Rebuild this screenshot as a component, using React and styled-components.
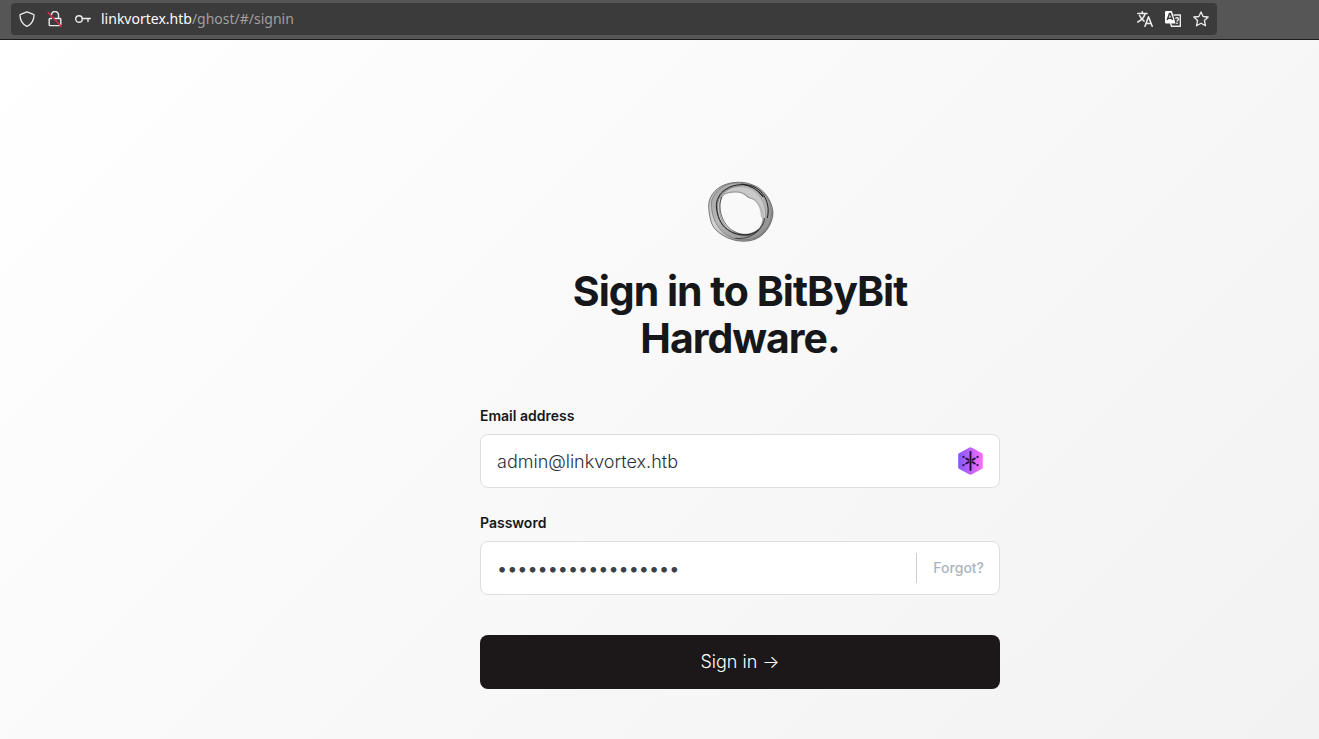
import React from 'react';
import styled, { createGlobalStyle } from 'styled-components';

const GlobalStyle = createGlobalStyle`
  *, *::before, *::after { box-sizing: border-box; }
  body {
    margin: 0;
    font-family: Inter, "Liberation Sans", sans-serif;
    color: #15171a;
  }
`;

const Page = styled.div`
  min-height: 100vh;
  display: flex;
  flex-direction: column;
`;

const Toolbar = styled.header`
  display: flex;
  height: 40px;
  padding: 3px 102px 4px 11px;
  background: #565656;
  border-bottom: 1px solid #1c1b1f;
`;

const AddressBar = styled.div`
  flex: 1;
  display: flex;
  align-items: center;
  justify-content: space-between;
  padding: 0 8px;
  border-radius: 4px;
  background: #3b3b3b;
`;

const IconGroup = styled.div`
  display: flex;
  align-items: center;
  gap: 12px;
`;

const ToolButton = styled.button`
  display: flex;
  padding: 0;
  border: 0;
  background: none;
  color: #ececec;
`;

const Url = styled.a`
  margin-left: -2px;
  font: 14px/20px "Noto Sans", sans-serif;
  color: #a0a0a0;
  text-decoration: none;
`;

const Host = styled.span`
  color: #fbfbfb;
`;

const Main = styled.main`
  flex: 1;
  display: flex;
  flex-direction: column;
  align-items: center;
  padding: 140px 0 48px 161px;
  background: linear-gradient(135deg, #ffffff 0%, #f2f2f2 100%);
`;

const Form = styled.form`
  display: flex;
  flex-direction: column;
  width: 100%;
  max-width: 520px;
`;

const Logo = styled.svg`
  align-self: center;
  display: block;
`;

const Title = styled.h1`
  margin: 24px 0 44px;
  padding: 0 64px;
  font-size: 41px;
  line-height: 47px;
  font-weight: 700;
  letter-spacing: -1px;
  text-align: center;
`;

const Field = styled.div`
  display: flex;
  flex-direction: column;
  gap: 8px;
  margin-bottom: 25px;
`;

const Label = styled.label`
  font-size: 14px;
  line-height: 20px;
  font-weight: 600;
`;

const InputBox = styled.div`
  display: flex;
  align-items: center;
  height: 54px;
  padding: 0 15px 0 16px;
  border: 1px solid #dddedf;
  border-radius: 8px;
  background: #ffffff;
`;

const Input = styled.input`
  flex: 1;
  min-width: 0;
  height: 100%;
  padding: 0;
  border: 0;
  outline: 0;
  background: none;
  font: 300 18px/24px Inter, sans-serif;
  font-weight: ${({ type }) => (type === 'password' ? 400 : 300)};
  color: ${({ type }) => (type === 'password' ? '#394047' : '#2b3138')};
`;

const ForgotButton = styled.button`
  height: 30px;
  padding: 0 0 0 16px;
  border: 0;
  border-left: 1px solid #c8ced3;
  background: none;
  font: 500 14px/20px Inter, sans-serif;
  color: #abb4be;
`;

const SubmitButton = styled.button`
  height: 54px;
  margin-top: 15px;
  border: 0;
  border-radius: 8px;
  background: #1c1719;
  font: 300 18px/24px Inter, sans-serif;
  color: #ffffff;
`;

const stroke = { fill: 'none', stroke: 'currentColor', strokeWidth: 1.3, strokeLinecap: 'round', strokeLinejoin: 'round' };

function ShieldIcon() {
  return (
    <svg width="16" height="16" viewBox="0 0 16 16" {...stroke}>
      <path d="M8 .8 14.500 3.300c.4.1.5.4.5.8 0 5-2 8.800-6.500 11.100a1.200 1.200 0 0 1-1 0C3 12.900 1 9.100 1 4.100c0-.4.1-.7.5-.8Z" />
    </svg>
  );
}

function InsecureLockIcon() {
  return (
    <svg width="16" height="16" viewBox="0 0 16 16" {...stroke} strokeWidth="1.400">
      <path d="M4.500 3.800a3.500 3.500 0 0 1 7 .4V7M7 7.500h6a.8.8 0 0 1 .8.8v5.200M4.500 7.500H3a.8.8 0 0 0-.8.8v5.500a.8.8 0 0 0 .8.8h9.500" />
      <path d="M1.200 1.700 14.200 15.200" stroke="#e22850" />
    </svg>
  );
}

function KeyIcon() {
  return (
    <svg width="16" height="16" viewBox="0 0 16 16" {...stroke} strokeWidth="1.400">
      <circle cx="4" cy="8" r="3.300" />
      <path d="M7.300 7.500h8M13 8v2.500" />
    </svg>
  );
}

function TranslateIcon() {
  return (
    <svg width="16" height="16" viewBox="0 0 16 16" {...stroke} strokeWidth="1.600">
      <path d="M.8 2.500h9.200M5.300.8v1.500M8 3C7 6.500 4.500 9 .8 11M2.600 4.500C3.700 7 5 8.800 7 10M8 15.200l3.500-9.400 3.700 9.400M9.300 12.500h4.600" />
    </svg>
  );
}

function TranslatePageIcon() {
  return (
    <svg width="16" height="16" viewBox="0 0 16 16" fill="none">
      <path d="M8.500 4h6.800v11.300H6.500l-1-3" stroke="currentColor" strokeWidth="1.400" />
      <path d="M0 1a1 1 0 0 1 1-1h6l3.500 12.500H1a1 1 0 0 1-1-1Z" fill="#ffffff" />
      <path d="m2.200 9 2.300-6.500h.8l2.300 6.500M3 7.200h4" stroke="#3b3b3b" strokeWidth="1.500" />
      <path d="M10.500 7.500c.6-1.200 3-1 3 .5 0 1.200-1.500 1.300-1.500 2.500M12 11.500v1.500" stroke="currentColor" strokeWidth="1.500" />
    </svg>
  );
}

function StarIcon() {
  return (
    <svg width="16" height="16" viewBox="0 0 16 16" {...stroke}>
      <path d="m8 .9 2.100 4.600 5.100.5-3.800 3.500 1.100 5.300L8 12.200l-4.500 2.600 1.100-5.300L.8 6l5.100-.5Z" />
    </svg>
  );
}

function RingLogo() {
  return (
    <Logo width="68" height="64" viewBox="32 30 204 192" role="img" aria-label="BitByBit Hardware">
      <defs>
        <linearGradient id="ring" x1="0" y1="0" x2="1" y2="1">
          <stop offset="0" stopColor="#8f8f8f" />
          <stop offset=".4" stopColor="#c0c0c0" />
          <stop offset="1" stopColor="#4d4d4d" />
        </linearGradient>
      </defs>
      <g fillRule="evenodd" stroke="#333333" strokeWidth="1.800" strokeLinejoin="round">
        <path fill="url(#ring)" fillOpacity=".65" d="M40 112C38 83 58 57 84 46C108 35 145 33 170 44C204 55 229 88 233 126C234 161 206 203 169 211C130 220 88 206 62 180C47 166 42 139 40 112ZM66 112C65 142 83 174 112 188C144 204 184 192 202 165C220 135 209 91 181 66C160 46 120 45 94 60C76 70 66 88 66 112Z" />
        <path fill="#808080" fillOpacity=".35" stroke="#666666" d="M49 92C57 66 79 47 106 41C142 33 184 46 207 72C231 99 236 143 216 173C195 207 152 216 116 205C76 193 44 150 49 92ZM74 96C65 126 82 168 108 184C140 199 176 195 194 172C211 148 203 113 181 91C171 82 162 89 148 74C134 62 111 64 91 70C82 75 77 84 74 96Z" />
        <path fill="#c4c4c4" fillOpacity=".5" stroke="#888888" d="M74 85C91 52 138 36 174 52C209 72 227 114 211 151C208 145 203 146 198 139C198 112 183 88 163 84C148 65 119 61 88 72Z" />
      </g>
      <g fill="none" stroke="#222222" strokeWidth="3" strokeLinecap="round">
        <path d="M83 64C108 41 148 40 173 49C209 64 226 106 216 143" />
        <path d="M83 64C68 76 60 100 64 118C68 148 80 171 105 184C133 200 168 199 190 181" />
        <path d="M79 82C70 103 72 138 94 166C109 185 136 196 162 195" strokeWidth="2" />
        <path d="M121 205C160 210 202 186 207 145" strokeWidth="2.200" />
        <path d="M139 42C168 47 190 62 203 80" strokeWidth="3.400" />
      </g>
    </Logo>
  );
}

function VaultIcon() {
  return (
    <svg width="26" height="28" viewBox="0 0 26 28" role="img" aria-label="Autofill">
      <defs>
        <linearGradient id="vault">
          <stop offset="0" stopColor="#8257fb" />
          <stop offset="1" stopColor="#fb6dfa" />
        </linearGradient>
      </defs>
      <path fill="url(#vault)" d="M11 .8a3 3 0 0 1 3 0l10 5.500a1.500 1.500 0 0 1 .8 1.400v12.600a1.500 1.500 0 0 1-.8 1.400l-10 5.500a3 3 0 0 1-3 0l-10-5.500a1.500 1.500 0 0 1-.8-1.400V7.700a1.500 1.500 0 0 1 .8-1.400Z" />
      <g stroke="#1d1138" strokeWidth="1.900" strokeLinecap="round">
        <path d="M12.500 5v18" />
        <path d="m5.300 9.800.4.200M8.200 11.500l2.300 1.300M19.700 9.800l-.4.200M16.800 11.500l-2.300 1.300M5.300 18.200l.4-.2M8.200 16.500l2.300-1.300M19.700 18.200l-.4-.2M16.800 16.500l-2.300-1.300" />
      </g>
    </svg>
  );
}

export default function App() {
  return (
    <Page>
      <GlobalStyle />
      <Toolbar>
        <AddressBar>
          <IconGroup>
            <ToolButton type="button" aria-label="Tracking protection"><ShieldIcon /></ToolButton>
            <ToolButton type="button" aria-label="Connection not secure"><InsecureLockIcon /></ToolButton>
            <ToolButton type="button" aria-label="Saved logins"><KeyIcon /></ToolButton>
            <Url href="#/signin"><Host>linkvortex.htb</Host>/ghost/#/signin</Url>
          </IconGroup>
          <IconGroup>
            <ToolButton type="button" aria-label="Translate"><TranslateIcon /></ToolButton>
            <ToolButton type="button" aria-label="Translate page"><TranslatePageIcon /></ToolButton>
            <ToolButton type="button" aria-label="Bookmark"><StarIcon /></ToolButton>
          </IconGroup>
        </AddressBar>
      </Toolbar>
      <Main>
        <Form onSubmit={(event) => event.preventDefault()}>
          <RingLogo />
          <Title>Sign in to BitByBit Hardware.</Title>
          <Field>
            <Label htmlFor="email">Email address</Label>
            <InputBox>
              <Input id="email" type="email" defaultValue="admin@linkvortex.htb" />
              <VaultIcon />
            </InputBox>
          </Field>
          <Field>
            <Label htmlFor="password">Password</Label>
            <InputBox>
              <Input id="password" type="password" defaultValue="examplepassword123" />
              <ForgotButton type="button">Forgot?</ForgotButton>
            </InputBox>
          </Field>
          <SubmitButton type="submit">Sign in →</SubmitButton>
        </Form>
      </Main>
    </Page>
  );
}
